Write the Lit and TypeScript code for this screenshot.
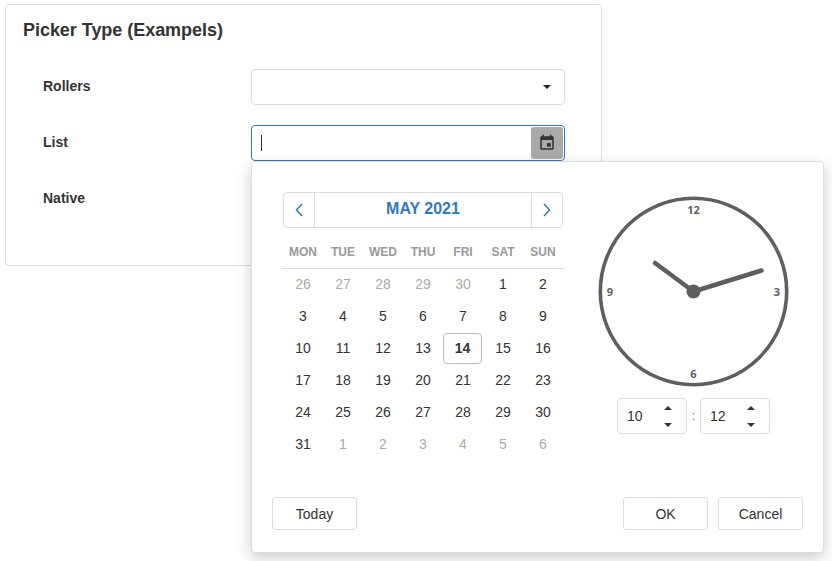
import { LitElement, html, css } from 'lit';
import { customElement } from 'lit/decorators.js';

const caret = html`<svg class="caret" width="8" height="4" viewBox="0 0 8 4"><path d="M0 0h8L4 4z" fill="#222"></path></svg>`;

const spinner = (val: string) => html`
  <div class="spin">
    <span>${val}</span>
    <div class="arrows">
      <svg width="8" height="4" viewBox="0 0 8 4"><path d="M4 0l4 4H0z" fill="#333"></path></svg>
      <svg width="8" height="4" viewBox="0 0 8 4"><path d="M0 0h8L4 4z" fill="#333"></path></svg>
    </div>
  </div>
`;

const WEEK = ['MON', 'TUE', 'WED', 'THU', 'FRI', 'SAT', 'SUN'];

const before = [26, 27, 28, 29, 30];
const after = [1, 2, 3, 4, 5, 6];

@customElement('app-root')
export class AppRoot extends LitElement {
  static styles = css`
    :host {
      display: block;
      height: 561px;
      padding: 4px 0 0 5px;
      box-sizing: border-box;
      font-family: 'Liberation Sans', Arial, sans-serif;
      font-size: 14px;
      color: #333;
      overflow: hidden;
    }
    .card {
      width: 597px;
      height: 262px;
      box-sizing: border-box;
      border: 1px solid #ddd;
      border-radius: 4px;
      padding: 15px 17px;
      background: #fff;
    }
    h1 {
      margin: 0 0 28px;
      font-size: 18px;
      line-height: 21px;
      font-weight: bold;
      letter-spacing: -0.04px;
    }
    .row {
      display: flex;
      align-items: center;
      height: 36px;
      margin-bottom: 20px;
      padding-left: 20px;
    }
    .row label {
      width: 208px;
      font-weight: bold;
      margin-top: -2px;
    }
    .input {
      position: relative;
      width: 314px;
      height: 36px;
      box-sizing: border-box;
      border: 1px solid #ddd;
      border-radius: 4px;
      display: flex;
      align-items: center;
      justify-content: flex-end;
    }
    .input .caret {
      margin-right: 13px;
    }
    .input.focus {
      border-color: #337ab7;
      justify-content: space-between;
      padding: 1px;
    }
    .cursor {
      width: 1px;
      height: 16px;
      background: #333;
      margin-left: 8px;
    }
    .cal-btn {
      width: 32px;
      height: 32px;
      background: #aaa;
      border-radius: 3px;
      display: flex;
      align-items: center;
      justify-content: center;
    }
    .popup {
      position: absolute;
      top: 35px;
      left: -1px;
      width: 573px;
      height: 392px;
      box-sizing: border-box;
      background: #fff;
      border: 1px solid #ddd;
      border-radius: 4px;
      box-shadow: 0 5px 15px rgba(0, 0, 0, 0.2);
      padding: 30px 20px 22px;
      display: flex;
      flex-direction: column;
      z-index: 2;
    }
    .main {
      display: flex;
      flex: 1;
      padding-left: 11px;
    }
    .cal {
      width: 280px;
    }
    .head {
      display: flex;
      height: 36px;
      box-sizing: border-box;
      border: 1px solid #ddd;
      border-radius: 4px;
    }
    .nav {
      width: 30px;
      display: flex;
      align-items: center;
      justify-content: center;
    }
    .nav.prev {
      border-right: 1px solid #ddd;
    }
    .nav.next {
      border-left: 1px solid #ddd;
    }
    .month {
      flex: 1;
      text-align: center;
      font-size: 16px;
      font-weight: bold;
      color: #337ab7;
      line-height: 32px;
    }
    .week {
      display: grid;
      grid-template-columns: repeat(7, 40px);
      margin: 0 -1px;
      padding: 0 1px;
      height: 41px;
      box-sizing: border-box;
      border-bottom: 1px solid #ddd;
      font-size: 12px;
      font-weight: bold;
      color: #999;
      text-align: center;
      line-height: 49px;
    }
    .days {
      display: grid;
      grid-template-columns: repeat(7, 40px);
      grid-auto-rows: 32px;
      margin-top: -1px;
      text-align: center;
      line-height: 32px;
    }
    .days span {
      box-sizing: border-box;
    }
    .days .muted {
      color: #aaa;
    }
    .days .today {
      width: 39px;
      height: 31px;
      margin-top: 1px;
      line-height: 29px;
      border: 1px solid #bbb;
      border-radius: 4px;
      font-weight: bold;
    }
    .side {
      margin-left: 35px;
      width: 191px;
      display: flex;
      flex-direction: column;
      align-items: center;
    }
    .clock {
      margin-top: 4px;
      display: block;
    }
    .clock text {
      font-family: 'Open Sans', sans-serif;
      font-size: 11px;
      font-weight: 700;
      fill: #5f5f5f;
      text-anchor: middle;
    }
    .time {
      display: flex;
      align-items: center;
      margin-top: 11px;
    }
    .colon {
      width: 13px;
      text-align: center;
      color: #777;
      font-size: 12px;
    }
    .spin {
      width: 70px;
      height: 36px;
      box-sizing: border-box;
      border: 1px solid #ddd;
      border-radius: 4px;
      display: flex;
      align-items: center;
      justify-content: space-between;
      padding: 0 14px 0 9px;
    }
    .arrows {
      display: flex;
      flex-direction: column;
      gap: 13px;
    }
    .arrows svg {
      display: block;
    }
    .foot {
      display: flex;
      gap: 10px;
    }
    button {
      width: 85px;
      height: 33px;
      background: #fff;
      border: 1px solid #ddd;
      border-radius: 3px;
      font: inherit;
      color: #333;
      padding: 0;
    }
    .spacer {
      flex: 1;
    }
  `;

  render() {
    const days: { d: number; cls: string }[] = [
      ...before.map((d) => ({ d, cls: 'muted' })),
      ...Array.from({ length: 31 }, (_, i) => ({ d: i + 1, cls: i === 13 ? 'today' : '' })),
      ...after.map((d) => ({ d, cls: 'muted' })),
    ];
    return html`
      <div class="card">
        <h1>Picker Type (Exampels)</h1>
        <div class="row">
          <label>Rollers</label>
          <div class="input">${caret}</div>
        </div>
        <div class="row">
          <label>List</label>
          <div class="input focus">
            <div class="cursor"></div>
            <div class="cal-btn">
              <svg width="18" height="18" viewBox="0 0 24 24" fill="#333">
                <path d="M17 12h-5v5h5v-5zM16 1v2H8V1H6v2H5c-1.11 0-1.99.9-1.99 2L3 19c0 1.1.89 2 2 2h14c1.1 0 2-.9 2-2V5c0-1.1-.9-2-2-2h-1V1h-2zm3 18H5V8h14v11z"></path>
              </svg>
            </div>
            <div class="popup">
              <div class="main">
                <div class="cal">
                  <div class="head">
                    <div class="nav prev">
                      <svg width="8" height="14" viewBox="0 0 8 14"><path d="M7 1L1.500 7 7 13" fill="none" stroke="#337ab7" stroke-width="1.500"></path></svg>
                    </div>
                    <div class="month">MAY 2021</div>
                    <div class="nav next">
                      <svg width="8" height="14" viewBox="0 0 8 14"><path d="M1 1l5.500 6L1 13" fill="none" stroke="#337ab7" stroke-width="1.500"></path></svg>
                    </div>
                  </div>
                  <div class="week">${WEEK.map((w) => html`<span>${w}</span>`)}</div>
                  <div class="days">
                    ${days.map((c) => html`<span class=${c.cls}>${c.d}</span>`)}
                  </div>
                </div>
                <div class="side">
                  <svg class="clock" width="191" height="191" viewBox="0 0 191 191">
                    <circle cx="95.500" cy="95.500" r="93.200" fill="none" stroke="#5f5f5f" stroke-width="3.600"></circle>
                    <text x="95.500" y="18">12</text>
                    <text x="95.500" y="182">6</text>
                    <text x="12" y="100">9</text>
                    <text x="179" y="100">3</text>
                    <line x1="95.500" y1="95.500" x2="57" y2="67" stroke="#5f5f5f" stroke-width="4.500" stroke-linecap="round"></line>
                    <line x1="95.500" y1="95.500" x2="163.500" y2="74.500" stroke="#5f5f5f" stroke-width="4.500" stroke-linecap="round"></line>
                    <circle cx="95.500" cy="95.500" r="7" fill="#5f5f5f"></circle>
                  </svg>
                  <div class="time">
                    ${spinner('10')}
                    <span class="colon">:</span>
                    ${spinner('12')}
                  </div>
                </div>
              </div>
              <div class="foot">
                <button>Today</button>
                <div class="spacer"></div>
                <button>OK</button>
                <button>Cancel</button>
              </div>
            </div>
          </div>
        </div>
        <div class="row">
          <label>Native</label>
        </div>
      </div>
    `;
  }
}
